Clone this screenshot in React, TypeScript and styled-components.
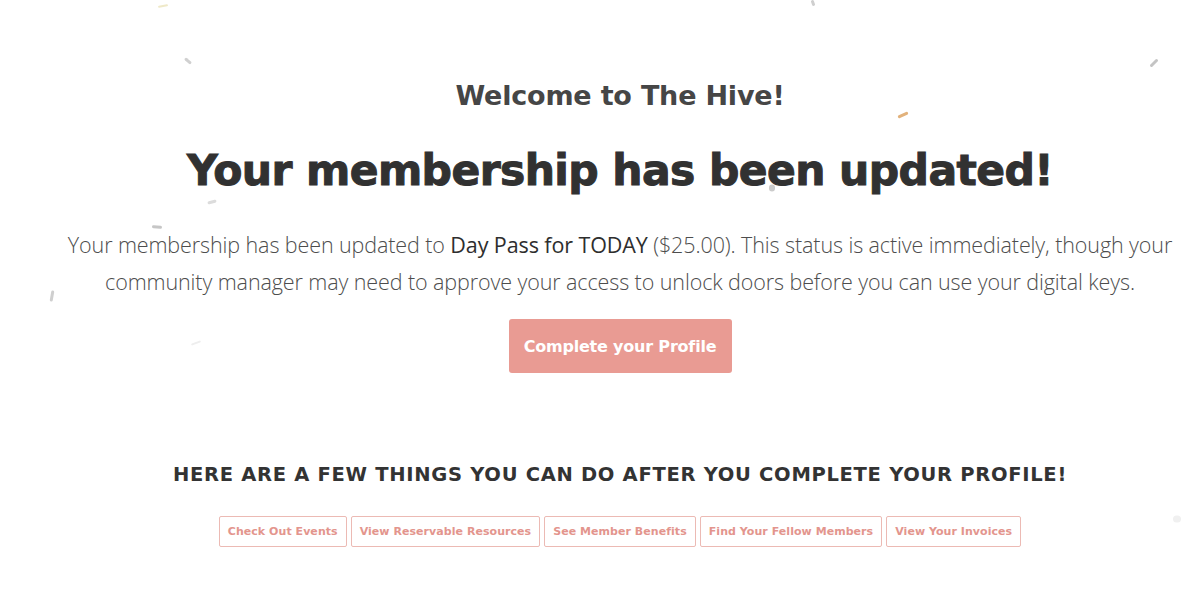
import React from "react";
import styled, { createGlobalStyle } from "styled-components";

const GlobalStyle = createGlobalStyle`
  html, body {
    margin: 0;
    padding: 0;
    background: #ffffff;
  }
  body {
    font-family: "Open Sans", "Liberation Sans", sans-serif;
  }
`;

const Page = styled.div`
  position: relative;
  width: 1200px;
  height: 600px;
  overflow: hidden;
  background: #fff;
`;

const Content = styled.main`
  display: flex;
  flex-direction: column;
  align-items: center;
  padding: 78px 0 0 40px;
`;

const Welcome = styled.h2`
  margin: 0;
  font-family: "DejaVu Sans", "Liberation Sans", sans-serif;
  font-weight: 700;
  font-size: 27px;
  line-height: 36px;
  letter-spacing: -0.2px;
  color: #464646;
`;

const Headline = styled.h1`
  margin: 29px 0 0;
  font-family: "DejaVu Sans", "Liberation Sans", sans-serif;
  font-weight: 900;
  font-size: 42.5px;
  line-height: 56px;
  letter-spacing: -0.6px;
  color: #313131;
  -webkit-text-stroke: 1px #313131;
`;

const Message = styled.p`
  margin: 27px 0 0;
  width: 1140px;
  text-align: center;
  font-family: "Open Sans", "Liberation Sans", sans-serif;
  font-weight: 300;
  font-size: 21.5px;
  line-height: 37px;
  letter-spacing: -0.1px;
  color: #4d4d4d;

  strong {
    font-weight: 400;
    color: #2e2e2e;
  }
`;

const PrimaryButton = styled.button`
  margin-top: 19px;
  width: 223px;
  height: 54px;
  border: none;
  border-radius: 3px;
  background: #e99b93;
  color: #fff;
  font-family: "DejaVu Sans", "Liberation Sans", sans-serif;
  font-weight: 700;
  font-size: 16px;
  letter-spacing: -0.2px;
  cursor: pointer;
`;

const SubHeading = styled.h3`
  margin: 88px 0 0;
  font-family: "DejaVu Sans", "Liberation Sans", sans-serif;
  font-weight: 700;
  font-size: 19.5px;
  line-height: 28px;
  letter-spacing: 0.7px;
  text-transform: uppercase;
  color: #333;
`;

const LinkRow = styled.nav`
  display: flex;
  gap: 4px;
  margin-top: 27px;
`;

const LinkButton = styled.a`
  display: flex;
  align-items: center;
  height: 31px;
  box-sizing: border-box;
  padding: 0 8px;
  border: 1px solid #ecbab4;
  border-radius: 2px;
  font-family: "DejaVu Sans", "Liberation Sans", sans-serif;
  font-weight: 700;
  font-size: 11px;
  letter-spacing: 0.05px;
  color: #e3958d;
  text-decoration: none;
  white-space: nowrap;
`;

const ConfettiLayer = styled.svg`
  position: absolute;
  inset: 0;
  pointer-events: none;
`;

const confetti = [
  { x: 163, y: 6, w: 10, h: 2, r: -10, c: "#efe9c8" },
  { x: 188, y: 61, w: 8, h: 3, r: 40, c: "#d0d0d0" },
  { x: 212, y: 202, w: 9, h: 3, r: -15, c: "#dcdcdc" },
  { x: 157, y: 227, w: 10, h: 3, r: 5, c: "#c6c6c6" },
  { x: 52, y: 296, w: 3, h: 11, r: 10, c: "#cfcfcf" },
  { x: 196, y: 343, w: 10, h: 2, r: -20, c: "#eeeeee" },
  { x: 903, y: 115, w: 11, h: 3, r: -25, c: "#e2b27c" },
  { x: 1154, y: 63, w: 3, h: 10, r: 45, c: "#c4c4c4" },
  { x: 772, y: 188, w: 6, h: 7, r: 0, c: "#cbcbcb" },
  { x: 813, y: 3, w: 3, h: 6, r: -20, c: "#cfcfcf" },
  { x: 1177, y: 519, w: 8, h: 7, r: 0, c: "#f0f0f0" },
];

const links = [
  "Check Out Events",
  "View Reservable Resources",
  "See Member Benefits",
  "Find Your Fellow Members",
  "View Your Invoices",
];

export default function App() {
  return (
    <Page>
      <GlobalStyle />
      <Content>
        <Welcome>Welcome to The Hive!</Welcome>
        <Headline>Your membership has been updated!</Headline>
        <Message>
          Your membership has been updated to <strong>Day Pass for TODAY</strong> ($25.00). This
          status is active immediately, though your community manager may need to approve your
          access to unlock doors before you can use your digital keys.
        </Message>
        <PrimaryButton>Complete your Profile</PrimaryButton>
        <SubHeading>Here are a few things you can do after you complete your profile!</SubHeading>
        <LinkRow>
          {links.map((l) => (
            <LinkButton key={l} href="#">
              {l}
            </LinkButton>
          ))}
        </LinkRow>
      </Content>
      <ConfettiLayer width="1200" height="600" viewBox="0 0 1200 600">
        {confetti.map((p, i) => (
          <rect
            key={i}
            x={p.x - p.w / 2}
            y={p.y - p.h / 2}
            width={p.w}
            height={p.h}
            rx={Math.min(p.w, p.h) / 2}
            fill={p.c}
            transform={`rotate(${p.r} ${p.x} ${p.y})`}
          />
        ))}
      </ConfettiLayer>
    </Page>
  );
}
